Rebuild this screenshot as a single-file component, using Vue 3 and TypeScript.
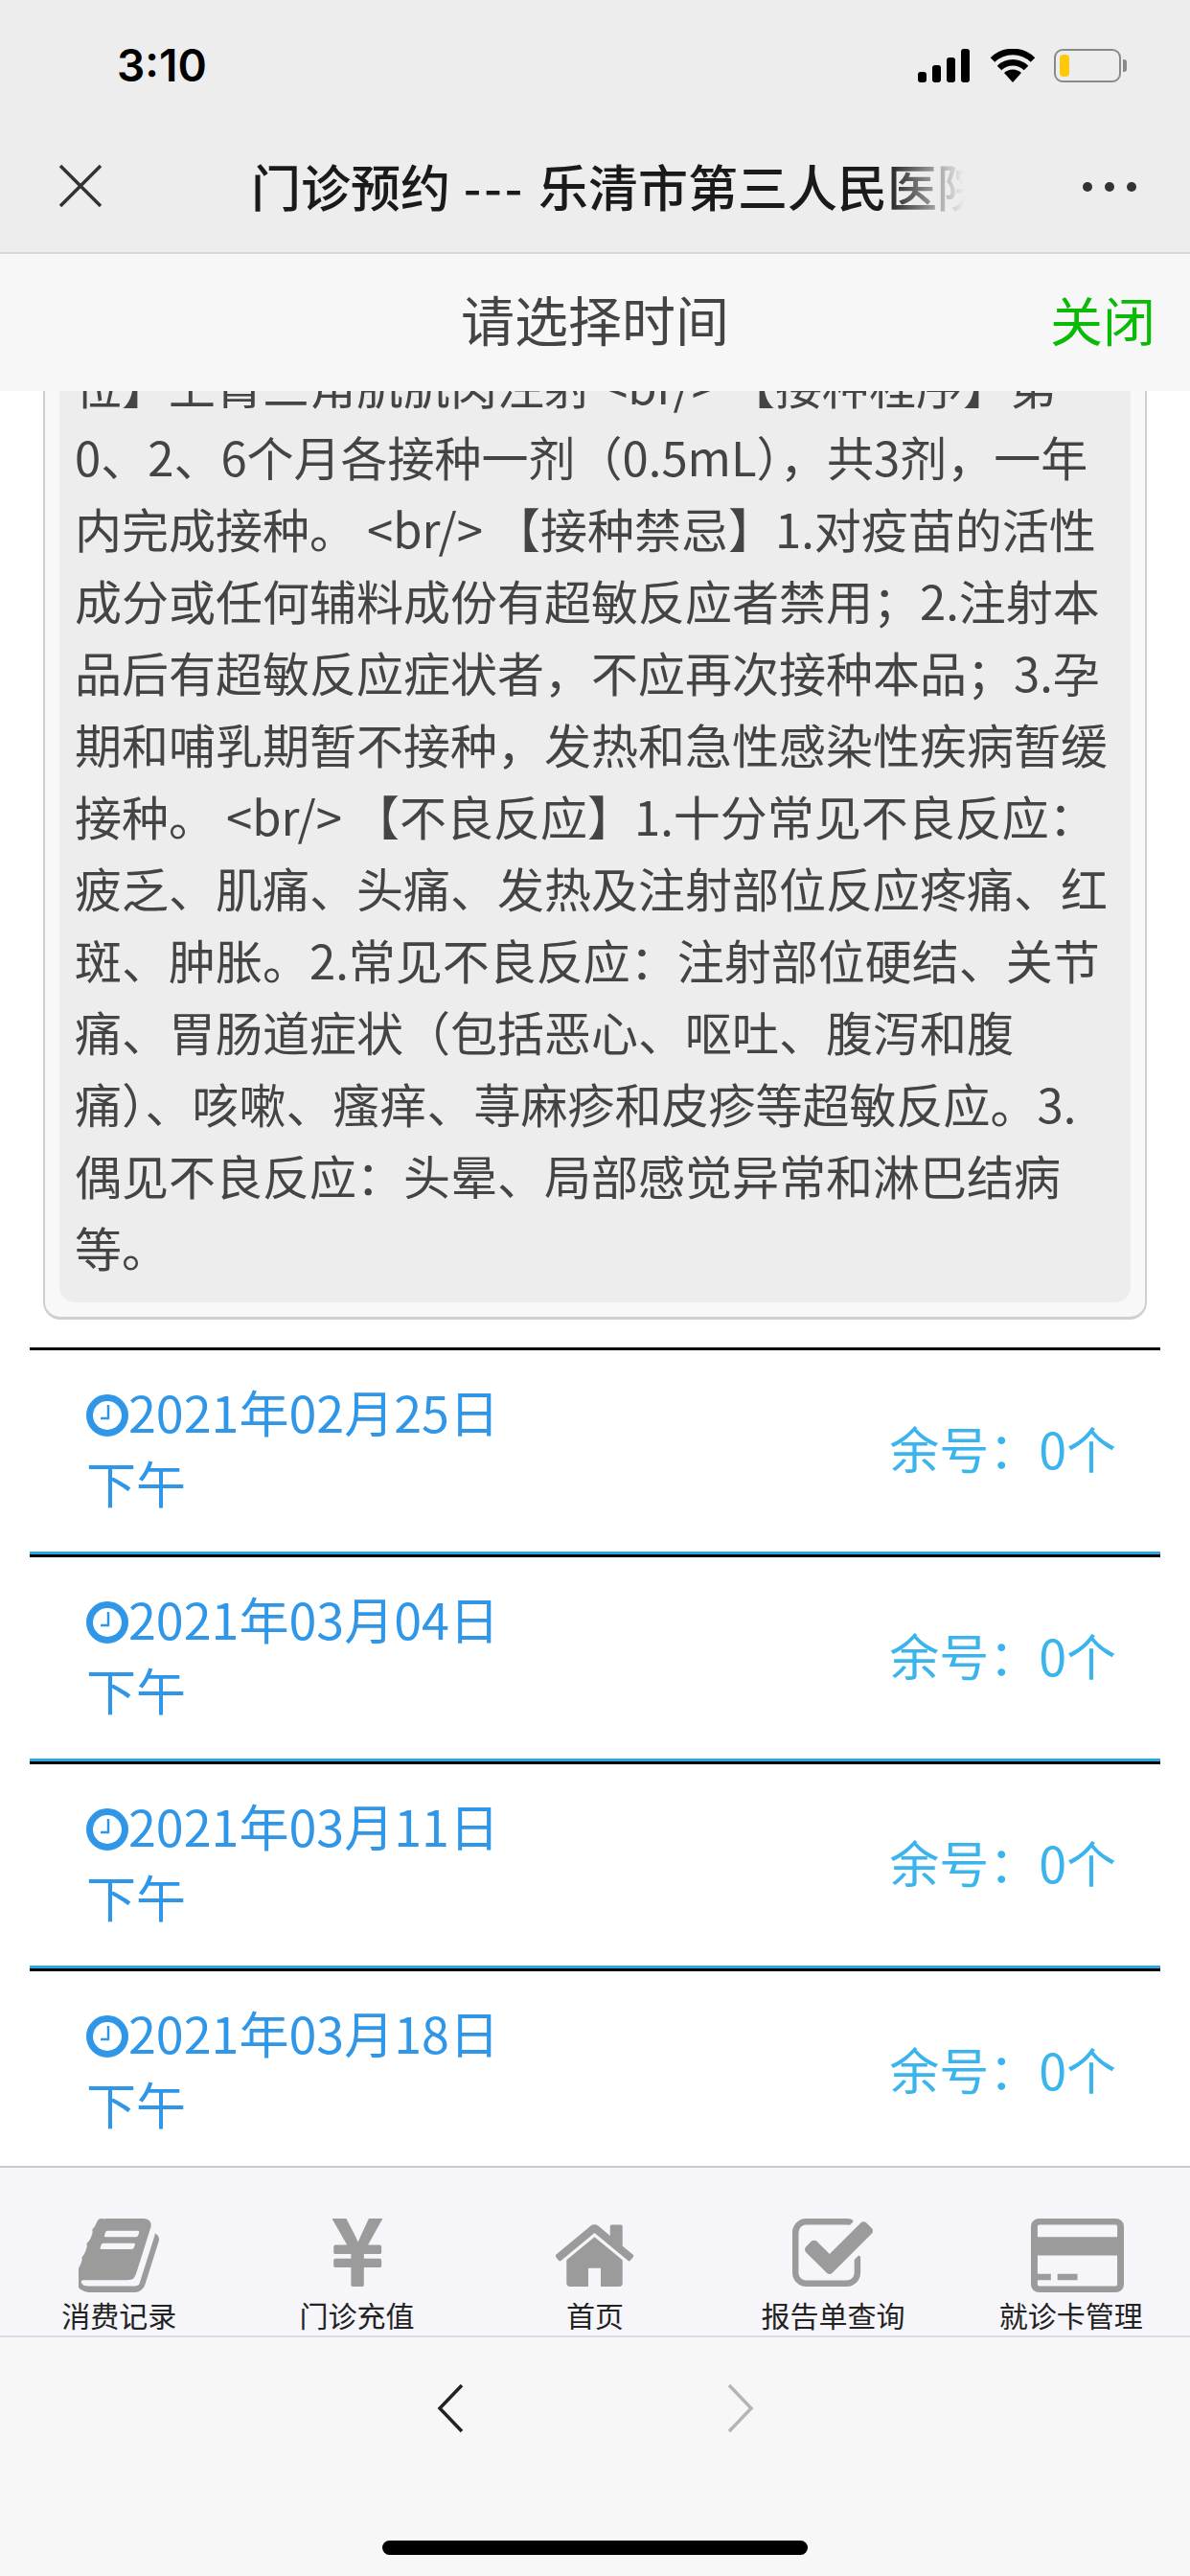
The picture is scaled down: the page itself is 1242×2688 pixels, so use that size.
<template>
  <div class="page">
    <header class="top">
      <div class="status">
        <span class="clock-time">3:10</span>
        <div class="status-icons">
          <svg width="56" height="35" viewBox="0 0 56 35">
            <rect x="0" y="24" width="9" height="11" rx="3" />
            <rect x="15" y="17" width="9" height="18" rx="3" />
            <rect x="30" y="9" width="9" height="26" rx="3" />
            <rect x="45" y="0" width="9" height="35" rx="3" />
          </svg>
          <svg width="48" height="35" viewBox="0 0 48 35">
            <path d="M24 35 L15 25 A13 13 0 0 1 33 25 Z" />
            <path d="M10 20 A20 20 0 0 1 38 20" class="wifi-arc" />
            <path d="M3 11.500 A30 30 0 0 1 45 11.500" class="wifi-arc" />
          </svg>
          <div class="battery">
            <div class="battery-level"></div>
          </div>
        </div>
      </div>
      <div class="nav">
        <svg class="nav-close" width="46" height="46" viewBox="0 0 46 46">
          <path d="M2 2 L44 44 M44 2 L2 44" />
        </svg>
        <div class="nav-title">门诊预约 <span class="nav-dash">---</span> 乐清市第三人民医院</div>
        <div class="nav-more"><i></i><i></i><i></i></div>
      </div>
    </header>

    <div class="modal-head">
      <span class="modal-title">请选择时间</span>
      <span class="modal-close">关闭</span>
    </div>

    <main class="content">
      <section class="card">
        <div class="card-body">
          <div v-for="(line, index) in introLines" :key="index" class="intro-line">{{ line }}</div>
        </div>
      </section>
      <ul class="slots">
        <li v-for="slot in slots" :key="slot.date" class="slot">
          <div class="slot-when">
            <div>
              <svg class="slot-clock" width="44" height="44" viewBox="0 0 44 44">
                <circle cx="22" cy="22" r="18.500" />
                <path d="M23 11 V25 H15" />
              </svg>{{ slot.date }}
            </div>
            <div>下午</div>
          </div>
          <div class="slot-left">余号：{{ slot.left }}个</div>
        </li>
      </ul>
    </main>

    <nav class="tabs">
      <div v-for="tab in tabs" :key="tab.label" class="tab">
        <div class="tab-icon">
          <svg :width="tab.w" :height="tab.h" :viewBox="tab.box" preserveAspectRatio="none">
            <path :d="tab.d" />
          </svg>
        </div>
        <span class="tab-label">{{ tab.label }}</span>
      </div>
    </nav>

    <footer class="browser-bar">
      <div class="arrows">
        <svg width="28" height="52" viewBox="0 0 28 52"><path d="M26 2 L3 26 L26 50" /></svg>
        <svg class="arrow-off" width="28" height="52" viewBox="0 0 28 52"><path d="M2 2 L25 26 L2 50" /></svg>
      </div>
      <div class="home-bar"></div>
    </footer>
  </div>
</template>

<script setup lang="ts">
interface Slot {
  date: string;
  left: number;
}

interface Tab {
  label: string;
  w: number;
  h: number;
  box: string;
  d: string;
}

const introLines: string[] = [
  '位】上臂三角肌肌肉注射 <br/> 【接种程序】第',
  '0、2、6个月各接种一剂（0.5mL），共3剂，一年',
  '内完成接种。 <br/> 【接种禁忌】1.对疫苗的活性',
  '成分或任何辅料成份有超敏反应者禁用；2.注射本',
  '品后有超敏反应症状者，不应再次接种本品；3.孕',
  '期和哺乳期暂不接种，发热和急性感染性疾病暂缓',
  '接种。 <br/> 【不良反应】1.十分常见不良反应：',
  '疲乏、肌痛、头痛、发热及注射部位反应疼痛、红',
  '斑、肿胀。2.常见不良反应：注射部位硬结、关节',
  '痛、胃肠道症状（包括恶心、呕吐、腹泻和腹',
  '痛）、咳嗽、瘙痒、荨麻疹和皮疹等超敏反应。3.',
  '偶见不良反应：头晕、局部感觉异常和淋巴结病',
  '等。'
];

const slots: Slot[] = [
  { date: '2021年02月25日', left: 0 },
  { date: '2021年03月04日', left: 0 },
  { date: '2021年03月11日', left: 0 },
  { date: '2021年03月18日', left: 0 }
];

const tabs: Tab[] = [
  {
    label: '消费记录',
    w: 84,
    h: 77,
    box: '60 128 1605 1536',
    d: 'M1639 478q40 57 18 129l-275 906q-19 64-76.500 107.500t-122.500 43.500h-923q-77 0-148.500-53.500t-99.500-131.500q-24-67-2-127 0-4 3-27t4-37q1-8-3-21.500t-3-19.500q2-11 8-21t16.500-23.500 16.500-23.500q23-38 45-91.500t30-91.500q3-10 .5-30t-.5-28q3-11 17-28t17-23q21-36 42-92t25-90q1-9-2.500-32t.5-28q4-13 22-30.500t22-22.500q19-26 42.500-84.500t27.500-96.500q1-8-3-25.500t-2-26.500q2-8 9-18t18-23 17-21q8-12 16.500-30.500t15-35 16-36 19.500-32 26.500-23.500 36-11.500 47.500 5.500l-1 3q38-9 51-9h761q74 0 114 56t18 130l-274 906q-36 119-71.500 153.500t-128.500 34.500h-869q-27 0-38 15-11 16-1 43 24 70 144 70h923q29 0 56-15.500t35-41.500l300-987q7-22 5-57 38 15 59 43zm-1064 2q-4 13 2 22.500t20 9.500h608q13 0 25.500-9.500t16.500-22.500l21-64q4-13-2-22.500t-20-9.500h-608q-13 0-25.500 9.500t-16.500 22.500zm-83 256q-4 13 2 22.500t20 9.500h608q13 0 25.500-9.500t16.500-22.500l21-64q4-13-2-22.500t-20-9.500h-608q-13 0-25.500 9.500t-16.500 22.500z'
  },
  {
    label: '门诊充值',
    w: 52,
    h: 71,
    box: '440 256 915 1280',
    d: 'M985.500 1536h-172q-13 0-22.500-9t-9.500-23v-330h-288q-13 0-22.500-9t-9.500-23v-103q0-13 9.500-22.500t22.500-9.500h288v-85h-288q-13 0-22.500-9t-9.500-23v-104q0-13 9.500-22.500t22.500-9.500h214l-321-578q-8-16 0-32 10-16 28-16h194q19 0 29 18l215 425q19 38 56 125 10-24 30.500-68t27.500-61l191-420q8-19 29-19h191q17 0 27 16 9 14 1 31l-313 579h215q13 0 22.500 9.500t9.500 22.500v104q0 14-9.500 23t-22.500 9h-290v85h290q13 0 22.500 9.500t9.500 22.500v103q0 14-9.500 23t-22.500 9h-290v330q0 13-9.500 22.500t-22.500 9.500z'
  },
  {
    label: '首页',
    w: 81,
    h: 71,
    box: '97 128 1598 1408',
    d: 'M1472 992v480q0 26-19 45t-45 19h-384v-384h-256v384h-384q-26 0-45-19t-19-45v-480q0-1 .5-3t.5-3l575-474 575 474q1 2 1 6zm223-69l-62 74q-8 9-21 11h-3q-13 0-21-7l-692-577-692 577q-12 8-24 7-13-2-21-11l-62-74q-8-10-7-23.500t11-21.500l719-599q32-26 76-26t76 26l244 204v-195q0-14 9-23t23-9h192q14 0 23 9t9 23v408l219 182q10 8 11 21.500t-7 23.500z'
  },
  {
    label: '报告单查询',
    w: 84,
    h: 71,
    box: '64 128 1663 1408',
    d: 'M1472 930v318q0 119-84.500 203.500t-203.500 84.500h-832q-119 0-203.500-84.500t-84.500-203.500v-832q0-119 84.500-203.500t203.500-84.500h832q63 0 117 25 15 7 18 23 3 17-9 29l-49 49q-10 10-23 10-3 0-9-2-23-6-45-6h-832q-66 0-113 47t-47 113v832q0 66 47 113t113 47h832q66 0 113-47t47-113v-254q0-13 9-22l64-64q10-10 23-10 6 0 12 3 20 8 20 29zm231-489l-814 814q-24 24-57 24t-57-24l-430-430q-24-24-24-57t24-57l110-110q24-24 57-24t57 24l263 263 647-647q24-24 57-24t57 24l110 110q24 24 24 57t-24 57z'
  },
  {
    label: '就诊卡管理',
    w: 97,
    h: 77,
    box: '128 128 1792 1536',
    d: 'M1760 128q66 0 113 47t47 113v1216q0 66-47 113t-113 47h-1472q-66 0-113-47t-47-113v-1216q0-66 47-113t113-47h1472zm-1472 128q-13 0-22.500 9.500t-9.500 22.500v224h1536v-224q0-13-9.500-22.500t-22.500-9.500h-1472zm1472 1280q13 0 22.500-9.500t9.500-22.500v-608h-1536v608q0 13 9.500 22.500t22.500 9.500h1472zm-1504-128v-128h256v128h-256zm384 0v-128h384v128h-384z'
  }
];
</script>

<style scoped>
.page {
  display: flex;
  flex-direction: column;
  width: 1242px;
  height: 2688px;
  overflow: hidden;
  background: #fff;
  font-family: "Noto Sans CJK SC", "Liberation Sans", sans-serif;
}

.top {
  height: 265px;
  flex-shrink: 0;
  background: #ededed;
  border-bottom: 2px solid #d9d9d9;
  box-sizing: border-box;
}

.status {
  display: flex;
  align-items: center;
  justify-content: space-between;
  height: 136px;
  box-sizing: border-box;
  padding: 0 72px 0 122px;
}

.clock-time {
  font-family: Inter, "Liberation Sans", sans-serif;
  font-size: 46px;
  font-weight: 600;
  color: #000;
}

.status-icons {
  display: flex;
  align-items: center;
  gap: 19px;
}

.status-icons svg {
  fill: #000;
}

.status-icons .wifi-arc {
  fill: none;
  stroke: #000;
  stroke-width: 6.500;
}

.battery {
  position: relative;
  box-sizing: border-box;
  width: 70px;
  height: 35px;
  padding: 4px;
  border: 2px solid #8a8a8a;
  border-radius: 9px;
}

.battery::after {
  content: "";
  position: absolute;
  top: 9px;
  right: -8px;
  width: 4px;
  height: 13px;
  border-radius: 0 3px 3px 0;
  background: #8a8a8a;
}

.battery-level {
  width: 10px;
  height: 100%;
  border-radius: 4px;
  background: #fcc90d;
}

.nav {
  display: flex;
  align-items: center;
  height: 127px;
  padding: 0 56px 12px 61px;
  box-sizing: border-box;
}

.nav-close {
  flex-shrink: 0;
}

.nav-close path {
  stroke: #333;
  stroke-width: 3.500;
  fill: none;
}

.nav-title {
  width: 744px;
  margin-left: 155px;
  overflow: hidden;
  white-space: nowrap;
  font-size: 52px;
  font-weight: 500;
  word-spacing: 2px;
  color: #1a1a1a;
  -webkit-mask-image: linear-gradient(to right, #000 89%, transparent 100%);
  mask-image: linear-gradient(to right, #000 89%, transparent 100%);
}

.nav-dash {
  letter-spacing: 3px;
}

.nav-more {
  display: flex;
  gap: 13px;
  margin: 3px 0 0 auto;
}

.nav-more i {
  width: 10px;
  height: 10px;
  border-radius: 50%;
  background: #333;
}

.modal-head {
  display: flex;
  align-items: center;
  justify-content: center;
  position: relative;
  height: 143px;
  flex-shrink: 0;
  box-sizing: border-box;
  padding-bottom: 10px;
  background: #f7f7f7;
}

.modal-title {
  font-size: 56px;
  color: #444;
}

.modal-close {
  position: absolute;
  right: 36px;
  font-size: 55px;
  color: #09bb07;
}

.content {
  flex: 1;
  min-height: 0;
  overflow: hidden;
}

.card {
  box-sizing: border-box;
  margin: -75px 45px 29px;
  padding: 17px 15px 15px;
  background: #f8f8f8;
  border: 2px solid #cfcfcf;
  border-bottom-width: 3px;
  border-radius: 18px;
}

.card-body {
  padding: 11px 16px 21px;
  background: #ededed;
  border-radius: 16px;
}

.intro-line {
  font-size: 49px;
  line-height: 75px;
  color: #444;
  white-space: pre;
}

.slots {
  margin: 0 31px;
  padding: 0;
  list-style: none;
}

.slot {
  display: flex;
  align-items: center;
  justify-content: space-between;
  box-sizing: border-box;
  height: 216px;
  flex-shrink: 0;
  padding: 0 46px 8px 59px;
  border-top: 3px solid #000;
  border-bottom: 3px solid #2aa9e0;
}

.slot-when {
  font-size: 52px;
  line-height: 74px;
  color: #3097e8;
  white-space: nowrap;
}

.slot-clock {
  vertical-align: -4px;
}

.slot-clock circle {
  fill: none;
  stroke: #3097e8;
  stroke-width: 7;
}

.slot-clock path {
  fill: none;
  stroke: #3097e8;
  stroke-width: 2.500;
}

.slot-left {
  font-size: 52px;
  color: #3ab4ec;
  white-space: nowrap;
}

.tabs {
  display: grid;
  grid-template-columns: repeat(5, 1fr);
  height: 179px;
  flex-shrink: 0;
  box-sizing: border-box;
  padding-top: 53px;
  background: #f5f5fa;
  border-top: 2px solid #c9c9d2;
  border-bottom: 2px solid #dcdce2;
}

.tab {
  display: flex;
  flex-direction: column;
  align-items: center;
}

.tab-icon {
  display: flex;
  height: 77px;
}

.tab:last-child .tab-icon {
  margin-left: 14px;
}

.tab-icon svg {
  fill: #9b9b9b;
}

.tab-label {
  margin-top: 1px;
  font-size: 30px;
  line-height: 44px;
  color: #222;
  white-space: nowrap;
}

.browser-bar {
  height: 249px;
  flex-shrink: 0;
  display: flex;
  flex-direction: column;
  align-items: center;
  box-sizing: border-box;
  background: #f7f7f7;
}

.arrows {
  display: flex;
  gap: 275px;
  margin-top: 48px;
}

.arrows path {
  fill: none;
  stroke: #222;
  stroke-width: 3.500;
}

.arrows .arrow-off path {
  stroke: #b5b5b5;
}

.home-bar {
  width: 444px;
  height: 15px;
  margin-top: 112px;
  border-radius: 8px;
  background: #000;
}
</style>
